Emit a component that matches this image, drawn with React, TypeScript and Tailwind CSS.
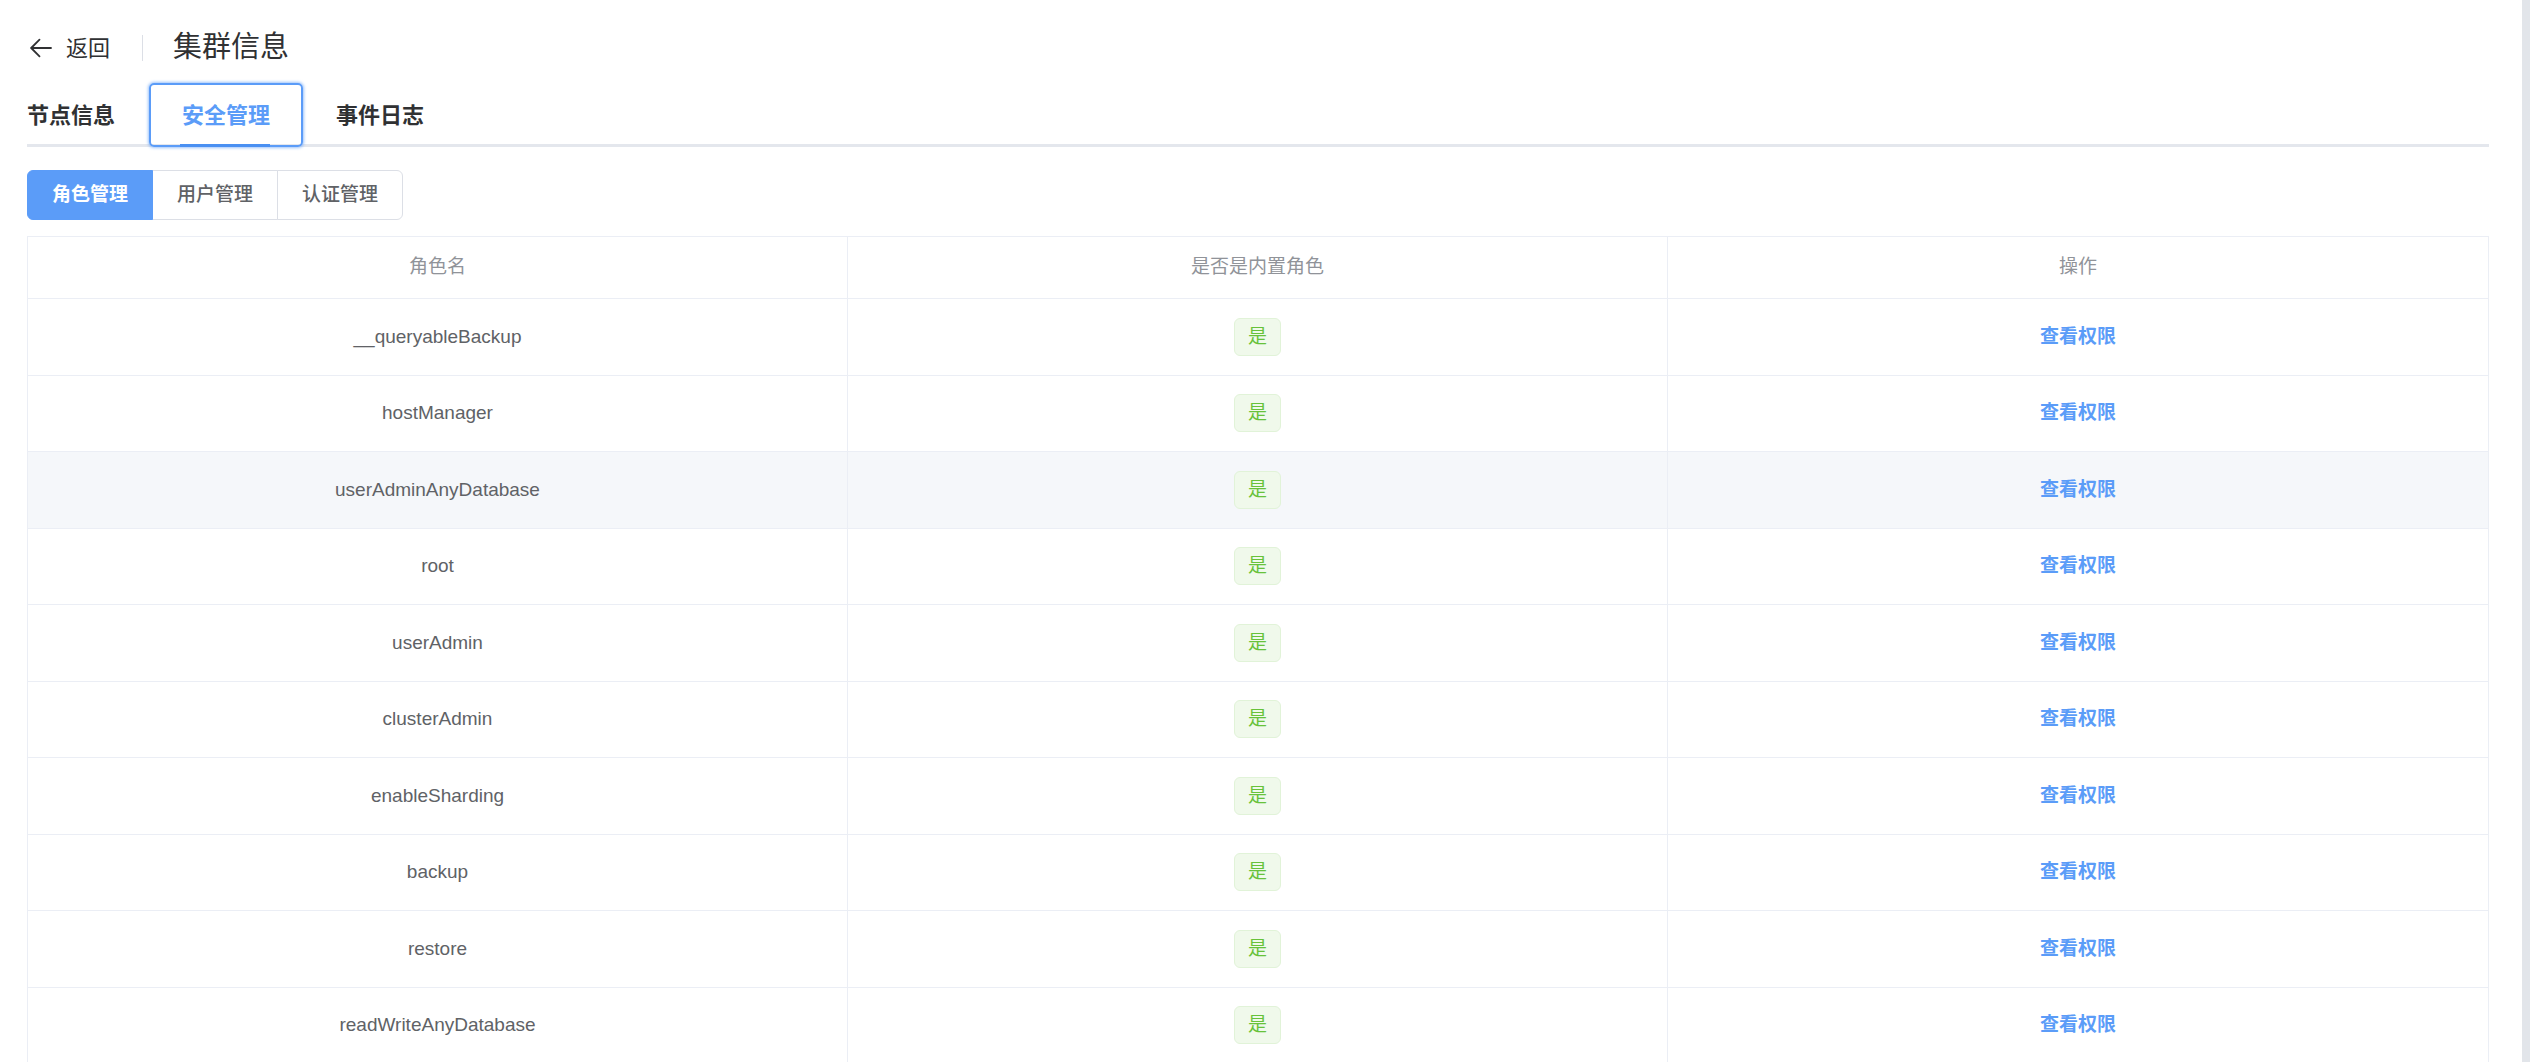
import React, { useState } from "react";

// Roles shown in the security table
const ROLES: string[] = [
  "__queryableBackup",
  "hostManager",
  "userAdminAnyDatabase",
  "root",
  "userAdmin",
  "clusterAdmin",
  "enableSharding",
  "backup",
  "restore",
  "readWriteAnyDatabase",
];

const TABS = ["节点信息", "安全管理", "事件日志"];
const SUB_TABS = ["角色管理", "用户管理", "认证管理"];

function BackArrow() {
  return (
    <svg width="24" height="24" viewBox="0 0 24 24" fill="none" stroke="#303133" strokeWidth="1.8" strokeLinecap="round" strokeLinejoin="round">
      <path d="M22 12H2.5" />
      <path d="M10.5 3.7L2.2 12l8.3 8.3" />
    </svg>
  );
}

export default function App() {
  const [tab, setTab] = useState(1);
  const [subTab, setSubTab] = useState(0);
  const [hovered, setHovered] = useState<number | null>(2);

  return (
    <div className="flex h-[1062px] w-full overflow-hidden bg-white font-['Liberation_Sans','Noto_Sans_CJK_SC',sans-serif]">
      <div className="flex-1 min-w-0 pl-[27px] pr-[33px]">
        {/* Header: back link and page title */}
        <div className="mt-[31px] flex h-[34px] items-center">
          <div className="ml-[2px] flex items-center gap-[13px] text-[22px] text-[#303133] cursor-pointer">
            <BackArrow />
            <span>返回</span>
          </div>
          <div className="ml-[32px] mr-[30px] h-[26px] w-px bg-[#dcdfe6]" />
          <div className="text-[29px] text-[#303133]">集群信息</div>
        </div>

        {/* Main tabs */}
        <div className="mt-[18px] flex h-[64px] border-b-[3px] border-[#e4e7ed]">
          {TABS.map((t, i) => (
            <button
              key={t}
              onClick={() => setTab(i)}
              className={
                i === tab
                  ? "relative -mb-[3px] h-[64px] rounded-[5px] border-2 border-[#5b9cf8] px-[31px] text-[22px] font-semibold text-[#5b9cf8] shadow-[0_0_3px_1px_rgba(91,156,248,0.6)]"
                  : i === 0
                  ? "relative -mb-[3px] h-[64px] pr-[34px] text-[22px] font-semibold text-[#303133]"
                  : "relative -mb-[3px] h-[64px] px-[33px] text-[22px] font-semibold text-[#303133]"
              }
            >
              {t}
              {i === tab && <span className="absolute bottom-[-2px] left-[29px] right-[31px] h-[3px] bg-[#4a90f2]" />}
            </button>
          ))}
        </div>

        {/* Sub tabs (button group) */}
        <div className="mt-[23px] flex">
          {SUB_TABS.map((t, i) => (
            <button
              key={t}
              onClick={() => setSubTab(i)}
              className={
                (i === 0 ? "rounded-l-[6px] " : i === SUB_TABS.length - 1 ? "rounded-r-[6px] -ml-px " : "-ml-px ") +
                (i === subTab
                  ? "relative z-10 h-[50px] w-[126px] border border-[#5b9cf8] bg-[#5b9cf8] text-[19px] font-semibold text-white"
                  : "h-[50px] w-[126px] border border-[#dcdfe6] bg-white text-[19px] font-medium text-[#606266]")
              }
            >
              {t}
            </button>
          ))}
        </div>

        {/* Roles table */}
        <div className="mt-[16px] border border-[#ebeef5]">
          <div className="grid h-[62px] grid-cols-3 border-b border-[#ebeef5] text-[19px] text-[#909399]">
            <div className="flex items-center justify-center border-r border-[#ebeef5]">角色名</div>
            <div className="flex items-center justify-center border-r border-[#ebeef5]">是否是内置角色</div>
            <div className="flex items-center justify-center">操作</div>
          </div>
          {ROLES.map((role, i) => (
            <div
              key={role}
              onMouseEnter={() => setHovered(i)}
              className={
                "grid h-[76.5px] grid-cols-3 border-b border-[#ebeef5] text-[19px] " +
                (hovered === i ? "bg-[#f5f7fa]" : "bg-white")
              }
            >
              <div className="flex items-center justify-center border-r border-[#ebeef5] text-[#606266]">{role}</div>
              <div className="flex items-center justify-center border-r border-[#ebeef5]">
                <span className="flex h-[38px] w-[47px] items-center justify-center rounded-[6px] border border-[#e1f3d8] bg-[#f0f9eb] text-[19px] text-[#67c23a]">
                  是
                </span>
              </div>
              <div className="flex items-center justify-center">
                <button className="text-[19px] font-semibold text-[#5b9cf8]">查看权限</button>
              </div>
            </div>
          ))}
        </div>
      </div>
      {/* Scrollbar track */}
      <div className="w-[8px] shrink-0 bg-[#e2e5ea]" />
    </div>
  );
}
